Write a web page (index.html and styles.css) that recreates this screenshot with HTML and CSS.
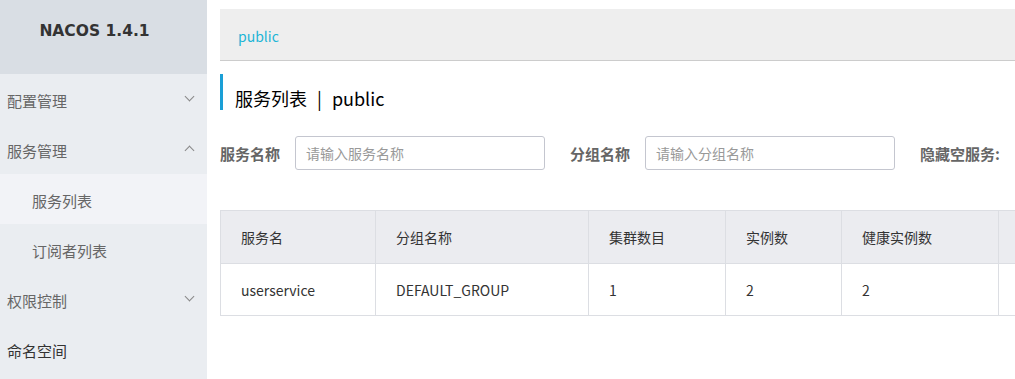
FILE: index.html
```html
<!DOCTYPE html>
<html lang="zh-CN">
<head>
    <meta charset="UTF-8">
    <title>Nacos</title>
    <link rel="stylesheet" href="styles.css">
</head>
<body>
    <aside class="sidebar">
        <div class="logo">NACOS 1.4.1</div>
        <ul class="menu">
            <li class="menu-item">配置管理<span class="arrow down"></span></li>
            <li class="menu-item">服务管理<span class="arrow up"></span></li>
            <li class="menu-item sub active">服务列表</li>
            <li class="menu-item sub">订阅者列表</li>
            <li class="menu-item">权限控制<span class="arrow down"></span></li>
            <li class="menu-item dark">命名空间</li>
        </ul>
    </aside>
    <main class="main">
        <div class="inner">
            <div class="ns-bar"><span class="ns-link">public</span></div>
            <h1 class="page-title">服务列表 <span class="sep">|</span> public</h1>
            <div class="search">
                <label class="search-label">服务名称</label>
                <input class="search-input" type="text" placeholder="请输入服务名称">
                <label class="search-label">分组名称</label>
                <input class="search-input" type="text" placeholder="请输入分组名称">
                <label class="search-label">隐藏空服务:</label>
            </div>
            <table class="grid">
                <thead>
                    <tr>
                        <th class="c1">服务名</th>
                        <th class="c2">分组名称</th>
                        <th class="c3">集群数目</th>
                        <th class="c4">实例数</th>
                        <th class="c5">健康实例数</th>
                        <th class="c6"></th>
                    </tr>
                </thead>
                <tbody>
                    <tr>
                        <td>userservice</td>
                        <td>DEFAULT_GROUP</td>
                        <td>1</td>
                        <td>2</td>
                        <td>2</td>
                        <td></td>
                    </tr>
                </tbody>
            </table>
        </div>
    </main>
</body>
</html>
```

FILE: styles.css
```css
/* Layout */
body {
    margin: 0;
    display: flex;
    height: 379px;
    overflow: hidden;
    font-family: "Noto Sans CJK SC", "Noto Sans", sans-serif;
    font-size: 14px;
    color: #333333;
    background-color: #FFFFFF;
}

/* Sidebar */
.sidebar {
    width: 207px;
    flex-shrink: 0;
    background-color: #EAEDF1;
}

.logo {
    height: 74px;
    line-height: 62px;
    text-align: center;
    padding-right: 18px;
    font-family: "DejaVu Sans", sans-serif;
    font-weight: bold;
    font-size: 15.5px;
    color: #333333;
    background-color: #D9DEE4;
}

.menu {
    list-style: none;
    margin: 0;
    padding: 0;
}

.menu-item {
    height: 50px;
    display: flex;
    align-items: center;
    justify-content: space-between;
    padding: 2px 14px 0 7px;
    box-sizing: border-box;
    font-size: 15px;
    color: #666666;
}

.menu-item.sub {
    padding-left: 32px;
}

.menu-item.active {
    background-color: #F2F3F7;
}

.menu-item.dark {
    color: #333333;
}

.arrow {
    width: 6px;
    height: 6px;
    border-right: 1px solid #888888;
    border-bottom: 1px solid #888888;
}

.arrow.down {
    transform: translateY(-4px) rotate(45deg);
}

.arrow.up {
    transform: translateY(0px) rotate(-135deg);
}

/* Main */
.main {
    flex: 1;
    overflow: hidden;
    padding: 9px 0 0 13px;
}

.inner {
    width: 1100px;
}

.ns-bar {
    height: 51px;
    background-color: #EEEEEE;
    border-bottom: 1px solid #CCCCCC;
    display: flex;
    align-items: center;
    padding-left: 18px;
}

.ns-link {
    color: #1CB5D6;
    font-size: 14px;
    padding-top: 3px;
}

.page-title {
    margin: 13px 0 0 0;
    height: 36px;
    border-left: 3px solid #1A9FD6;
    padding-left: 12px;
    display: flex;
    align-items: center;
    font-size: 18px;
    font-weight: normal;
    color: #000000;
    padding-top: 12px;
    box-sizing: border-box;
}

.sep {
    margin: 0 10px;
}

.search {
    display: flex;
    align-items: center;
    margin-top: 26px;
    height: 34px;
}

.search-label {
    width: 75px;
    flex-shrink: 0;
    font-size: 15px;
    font-weight: bold;
    color: #666666;
}

.search-label:last-child {
    width: auto;
}

.search-input {
    width: 250px;
    height: 34px;
    box-sizing: border-box;
    border: 1px solid #C4C6CF;
    border-radius: 3px;
    padding: 0 10px;
    font-family: "Noto Sans CJK SC", sans-serif;
    font-size: 14px;
    margin-right: 25px;
    outline: none;
}

.search-input::placeholder {
    color: #999999;
}

/* Table */
.grid {
    margin-top: 40px;
    border-collapse: collapse;
    table-layout: fixed;
    width: 1000px;
}

.grid th,
.grid td {
    box-sizing: border-box;
    border: 1px solid #DCDEE3;
    text-align: left;
    padding: 0 0 0 20px;
    font-weight: normal;
    color: #333333;
}

.grid th {
    height: 53px;
    background-color: #EBECF0;
}

.grid td {
    height: 52px;
}

.c1 { width: 155px; }
.c2 { width: 213px; }
.c3 { width: 137px; }
.c4 { width: 116px; }
.c5 { width: 157px; }
```
